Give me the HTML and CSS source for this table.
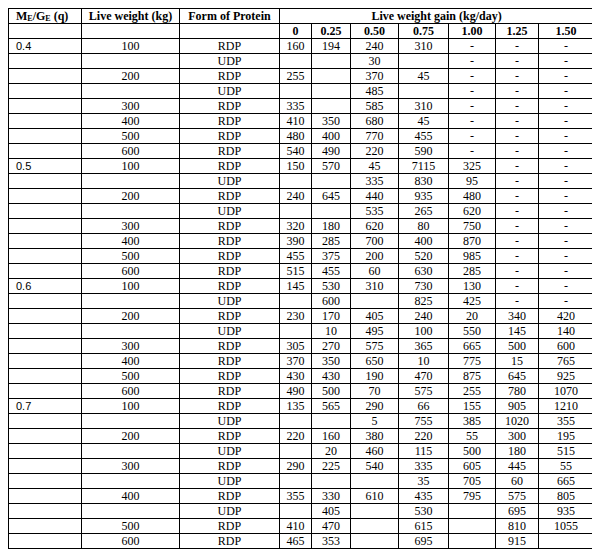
FILE: index.html
```html
<!DOCTYPE html>
<html>
<head>
<meta charset="utf-8">
<link rel="stylesheet" href="styles.css">
</head>
<body>
<table class="grid">
<colgroup>
<col class="c-q"><col class="c-w"><col class="c-f"><col class="c-0"><col class="c-25"><col class="c-50"><col class="c-75"><col class="c-100"><col class="c-125"><col class="c-150">
</colgroup>
<thead>
<tr><th class="left">M<sub>E</sub>/G<sub>E</sub> (q)</th><th>Live weight (kg)</th><th>Form of Protein</th><th colspan="7">Live weight gain (kg/day)</th></tr>
<tr><td></td><td></td><td></td><th>0</th><th>0.25</th><th>0.50</th><th>0.75</th><th>1.00</th><th>1.25</th><th>1.50</th></tr>
</thead>
<tbody>
<tr><td class="q">0.4</td><td>100</td><td>RDP</td><td>160</td><td>194</td><td>240</td><td>310</td><td>-</td><td>-</td><td>-</td></tr>
<tr><td class="q"></td><td></td><td>UDP</td><td></td><td></td><td>30</td><td></td><td>-</td><td>-</td><td>-</td></tr>
<tr><td class="q"></td><td>200</td><td>RDP</td><td>255</td><td></td><td>370</td><td>45</td><td>-</td><td>-</td><td>-</td></tr>
<tr><td class="q"></td><td></td><td>UDP</td><td></td><td></td><td>485</td><td></td><td>-</td><td>-</td><td>-</td></tr>
<tr><td class="q"></td><td>300</td><td>RDP</td><td>335</td><td></td><td>585</td><td>310</td><td>-</td><td>-</td><td>-</td></tr>
<tr><td class="q"></td><td>400</td><td>RDP</td><td>410</td><td>350</td><td>680</td><td>45</td><td>-</td><td>-</td><td>-</td></tr>
<tr><td class="q"></td><td>500</td><td>RDP</td><td>480</td><td>400</td><td>770</td><td>455</td><td>-</td><td>-</td><td>-</td></tr>
<tr><td class="q"></td><td>600</td><td>RDP</td><td>540</td><td>490</td><td>220</td><td>590</td><td>-</td><td>-</td><td>-</td></tr>
<tr><td class="q">0.5</td><td>100</td><td>RDP</td><td>150</td><td>570</td><td>45</td><td>7115</td><td>325</td><td>-</td><td>-</td></tr>
<tr><td class="q"></td><td></td><td>UDP</td><td></td><td></td><td>335</td><td>830</td><td>95</td><td>-</td><td>-</td></tr>
<tr><td class="q"></td><td>200</td><td>RDP</td><td>240</td><td>645</td><td>440</td><td>935</td><td>480</td><td>-</td><td>-</td></tr>
<tr><td class="q"></td><td></td><td>UDP</td><td></td><td></td><td>535</td><td>265</td><td>620</td><td>-</td><td>-</td></tr>
<tr><td class="q"></td><td>300</td><td>RDP</td><td>320</td><td>180</td><td>620</td><td>80</td><td>750</td><td>-</td><td>-</td></tr>
<tr><td class="q"></td><td>400</td><td>RDP</td><td>390</td><td>285</td><td>700</td><td>400</td><td>870</td><td>-</td><td>-</td></tr>
<tr><td class="q"></td><td>500</td><td>RDP</td><td>455</td><td>375</td><td>200</td><td>520</td><td>985</td><td>-</td><td>-</td></tr>
<tr><td class="q"></td><td>600</td><td>RDP</td><td>515</td><td>455</td><td>60</td><td>630</td><td>285</td><td>-</td><td>-</td></tr>
<tr><td class="q">0.6</td><td>100</td><td>RDP</td><td>145</td><td>530</td><td>310</td><td>730</td><td>130</td><td>-</td><td>-</td></tr>
<tr><td class="q"></td><td></td><td>UDP</td><td></td><td>600</td><td></td><td>825</td><td>425</td><td>-</td><td>-</td></tr>
<tr><td class="q"></td><td>200</td><td>RDP</td><td>230</td><td>170</td><td>405</td><td>240</td><td>20</td><td>340</td><td>420</td></tr>
<tr><td class="q"></td><td></td><td>UDP</td><td></td><td>10</td><td>495</td><td>100</td><td>550</td><td>145</td><td>140</td></tr>
<tr><td class="q"></td><td>300</td><td>RDP</td><td>305</td><td>270</td><td>575</td><td>365</td><td>665</td><td>500</td><td>600</td></tr>
<tr><td class="q"></td><td>400</td><td>RDP</td><td>370</td><td>350</td><td>650</td><td>10</td><td>775</td><td>15</td><td>765</td></tr>
<tr><td class="q"></td><td>500</td><td>RDP</td><td>430</td><td>430</td><td>190</td><td>470</td><td>875</td><td>645</td><td>925</td></tr>
<tr><td class="q"></td><td>600</td><td>RDP</td><td>490</td><td>500</td><td>70</td><td>575</td><td>255</td><td>780</td><td>1070</td></tr>
<tr><td class="q">0.7</td><td>100</td><td>RDP</td><td>135</td><td>565</td><td>290</td><td>66</td><td>155</td><td>905</td><td>1210</td></tr>
<tr><td class="q"></td><td></td><td>UDP</td><td></td><td></td><td>5</td><td>755</td><td>385</td><td>1020</td><td>355</td></tr>
<tr><td class="q"></td><td>200</td><td>RDP</td><td>220</td><td>160</td><td>380</td><td>220</td><td>55</td><td>300</td><td>195</td></tr>
<tr><td class="q"></td><td></td><td>UDP</td><td></td><td>20</td><td>460</td><td>115</td><td>500</td><td>180</td><td>515</td></tr>
<tr><td class="q"></td><td>300</td><td>RDP</td><td>290</td><td>225</td><td>540</td><td>335</td><td>605</td><td>445</td><td>55</td></tr>
<tr><td class="q"></td><td></td><td>UDP</td><td></td><td></td><td></td><td>35</td><td>705</td><td>60</td><td>665</td></tr>
<tr><td class="q"></td><td>400</td><td>RDP</td><td>355</td><td>330</td><td>610</td><td>435</td><td>795</td><td>575</td><td>805</td></tr>
<tr><td class="q"></td><td></td><td>UDP</td><td></td><td>405</td><td></td><td>530</td><td></td><td>695</td><td>935</td></tr>
<tr><td class="q"></td><td>500</td><td>RDP</td><td>410</td><td>470</td><td></td><td>615</td><td></td><td>810</td><td>1055</td></tr>
<tr><td class="q"></td><td>600</td><td>RDP</td><td>465</td><td>353</td><td></td><td>695</td><td></td><td>915</td><td></td></tr>
</tbody>
</table>
</body>
</html>
```

FILE: styles.css
```css
html, body {
  background: #ffffff;
}
body {
  margin: 8px;
  font-family: "Liberation Serif", "Times New Roman", serif;
  font-size: 12px;
  color: #000000;
}
.grid {
  border-collapse: collapse;
  table-layout: fixed;
  width: 586px;
  box-shadow: 0 0 0 1px #9a9a9a;
}
.c-q { width: 73px; }
.c-w { width: 98px; }
.c-f { width: 100px; }
.c-0 { width: 32px; }
.c-25 { width: 39px; }
.c-50 { width: 48px; }
.c-75 { width: 50px; }
.c-100 { width: 47px; }
.c-125 { width: 43px; }
.c-150 { width: 55px; }
.grid td,
.grid th {
  border: 1px solid #000000;
  height: 14px;
  padding: 0;
  line-height: 14px;
  text-align: center;
  vertical-align: middle;
  white-space: nowrap;
  overflow: hidden;
}
.grid th {
  font-weight: bold;
}
.grid th.left {
  text-align: left;
  padding-left: 7px;
}
.grid td.q {
  text-align: left;
  padding-left: 7px;
  font-family: "Liberation Sans", Arial, sans-serif;
  font-size: 11px;
}
.grid sub {
  font-size: 8px;
  line-height: 0;
  vertical-align: -1px;
}
```
